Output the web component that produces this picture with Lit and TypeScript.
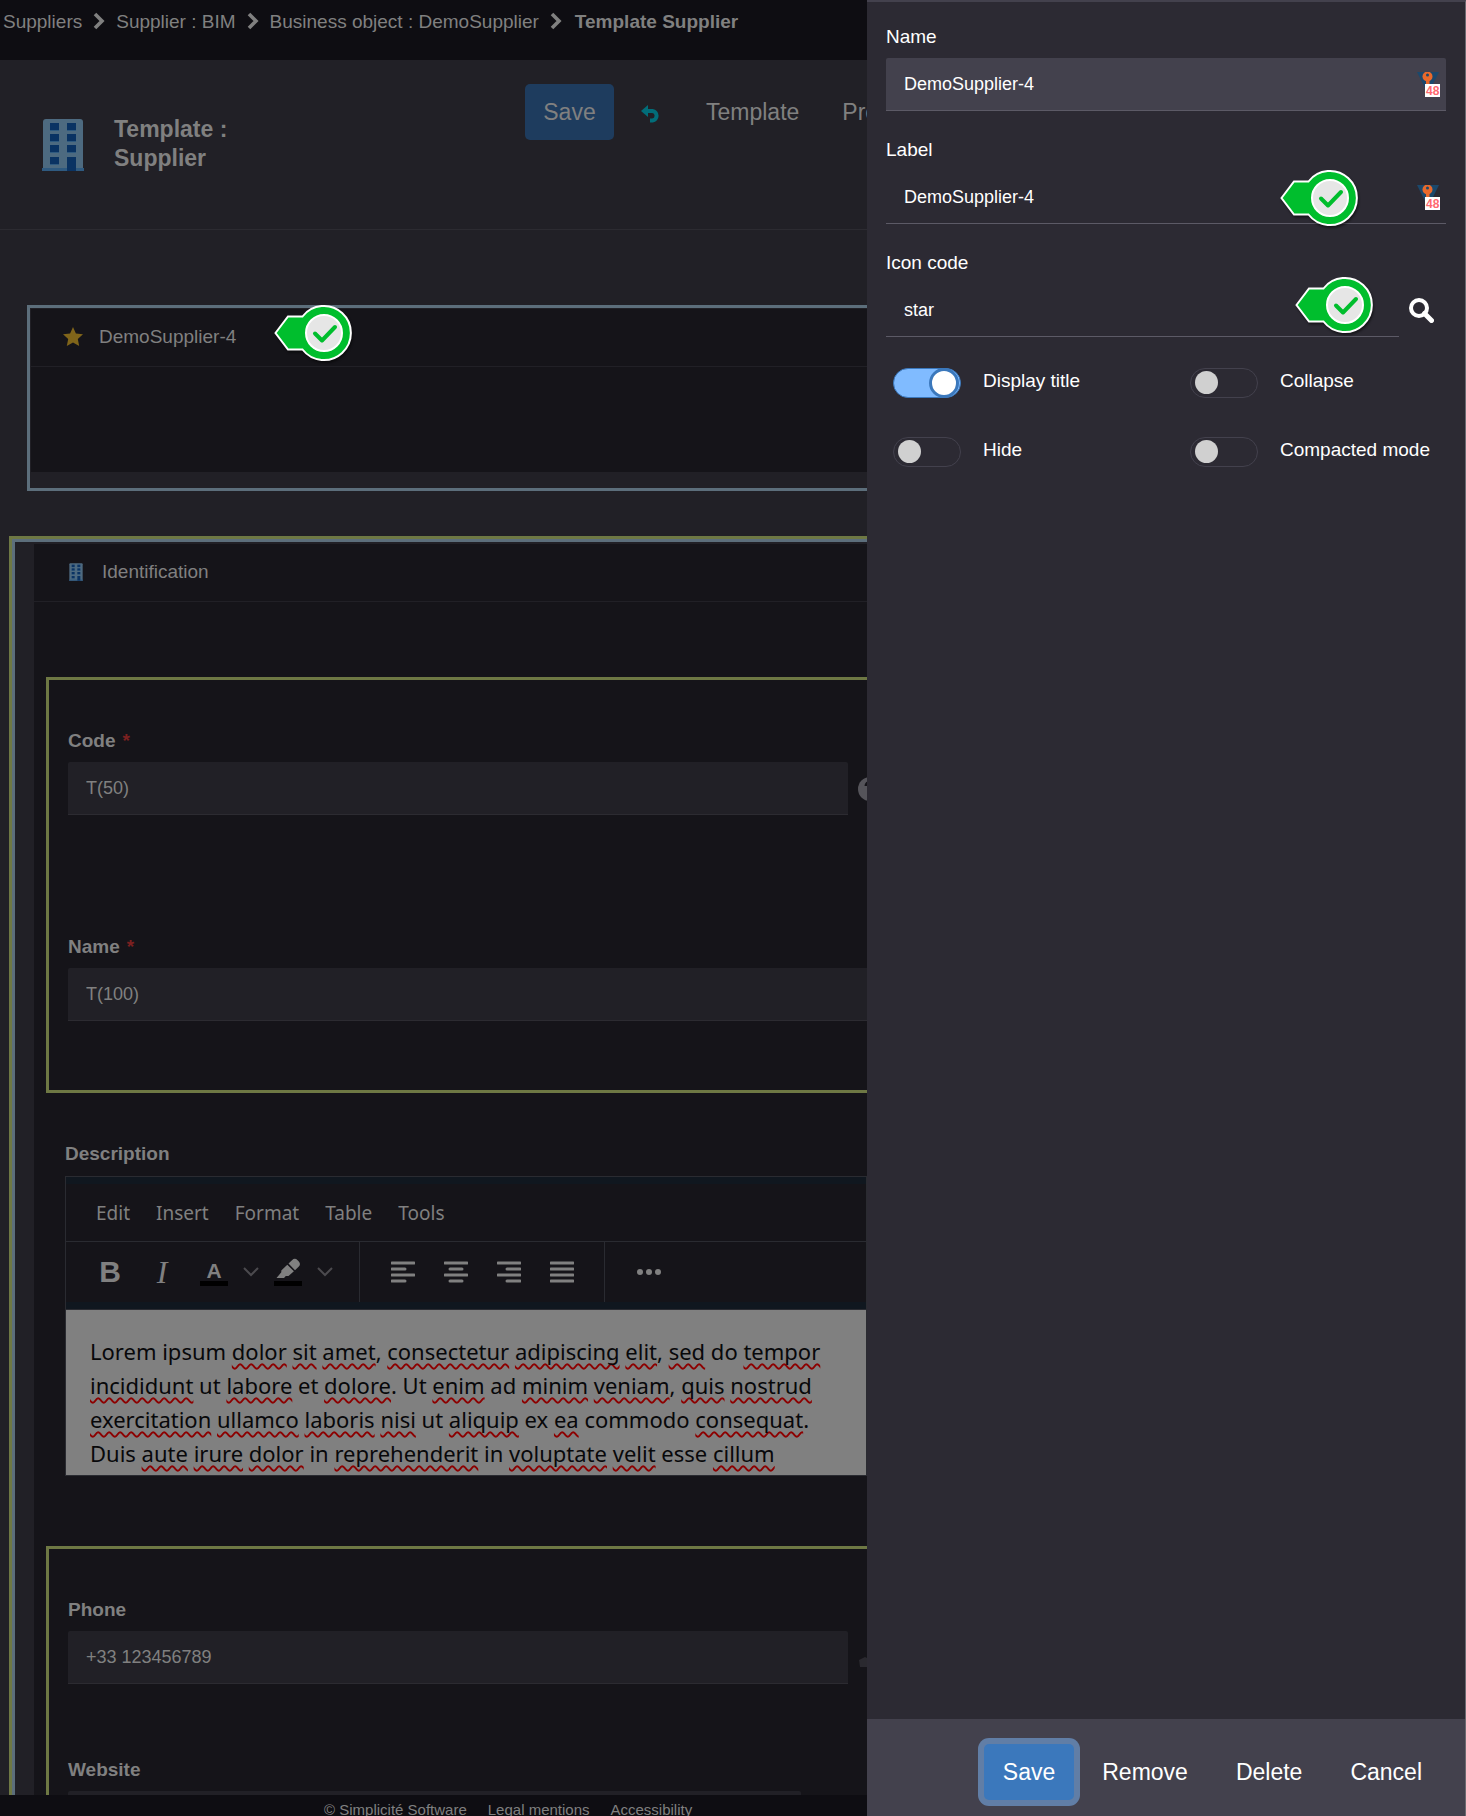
import { LitElement, html, css, svg, nothing } from "lit";
import { customElement, property } from "lit/decorators.js";

const chevron = html`<svg class="crumb-sep" viewBox="0 0 12 18" aria-hidden="true">
  <path d="M2 2l7 7-7 7" fill="none" stroke="currentColor" stroke-width="3.6" />
</svg>`;

const building = (cls: string) => html`<svg class=${cls} viewBox="0 0 42 52" aria-hidden="true">
  <path d="M1 52V3a3 3 0 0 1 3-3h34a3 3 0 0 1 3 3v49z" fill="#4d6a80" />
  <path d="M0 49h42v3H0z" fill="#2f5a80" />
  ${[4, 15, 26, 38].map((y) => svg`<path d="M8 ${y}h9v7H8z" fill="#0a3363" /><path d="M8 ${y + 7}h9v1H8z" fill="#2f5a80" />`)}
  ${[4, 15, 26].map((y) => svg`<path d="M25 ${y}h9v7h-9z" fill="#0a3363" /><path d="M25 ${y + 7}h9v1h-9z" fill="#2f5a80" />`)}
  <path d="M25 38h9v14h-9z" fill="#0a3363" />
</svg>`;

const alignIcon = (rows: number[][]) => html`<svg class="ic24" viewBox="0 0 24 22" aria-hidden="true">
  ${rows.map(([x1, x2], i) => svg`<path d="M${x1 + 1} ${2 + i * 6}H${x2 - 1}" stroke="currentColor" stroke-width="3" stroke-linecap="round" />`)}
</svg>`;

const caret = html`<svg class="caret" viewBox="0 0 16 10" aria-hidden="true">
  <path d="M1 1l7 7 7-7" fill="none" stroke="currentColor" stroke-width="2" />
</svg>`;

@customElement("check-marker")
export class CheckMarker extends LitElement {
  static styles = css`
    :host { display: block; width: 80px; height: 60px; pointer-events: none; }
    .pin { display: block; width: 80px; height: 60px; filter: drop-shadow(1px 2px 1px rgba(0, 0, 0, 0.5)); }
  `;
  render() {
    return html`<svg class="pin" viewBox="0 0 80 60" aria-hidden="true">
      <path d="M1.5 29L14 12.5H28.5A27 27 0 1 1 28.5 45.5H14Z" fill="#00be2d" stroke="#fff" stroke-width="2" />
      <circle cx="50" cy="29" r="18" fill="#e6e6e6" stroke="#fff" stroke-width="2" />
      <path d="M41 29.5l7 7 13-13.500" fill="none" stroke="#00be2d" stroke-width="4" stroke-linecap="round" stroke-linejoin="round" />
    </svg>`;
  }
}

@customElement("toggle-option")
export class ToggleOption extends LitElement {
  @property() label = "";
  @property({ type: Boolean }) on = false;
  static styles = css`
    .row { display: flex; align-items: center; gap: 22px; font: 19px/30px "Liberation Sans", sans-serif; color: #fff; white-space: nowrap; }
    .box { appearance: none; flex: none; display: flex; align-items: center; box-sizing: border-box; width: 68px; height: 30px; margin: 0; padding: 0 4px; border: 1px solid #43414d; border-radius: 15px; background: #2c2a33; }
    .box::before { content: ""; flex: none; width: 23px; height: 23px; border-radius: 50%; background: #d0d0d0; }
    .box:checked { justify-content: flex-end; padding: 0 1px 0 0; border-color: #3b78bc; background: #80bbff; }
    .box:checked::before { width: 24px; height: 24px; background: #fff; border: 3px solid #3b78bc; }
    .text { padding-bottom: 3px; }
  `;
  render() {
    return html`<label class="row">
      <input class="box" type="checkbox" role="switch" .checked=${this.on} />
      <span class="text">${this.label}</span>
    </label>`;
  }
}

@customElement("side-panel")
export class SidePanel extends LitElement {
  static styles = css`
    :host { display: flex; flex-direction: column; box-sizing: border-box; background: #2c2a33; border-top: 2px solid #43414d; border-right: 1px solid #6b6a70; color: #fff; font: 19px/23px "Liberation Sans", Arial, sans-serif; }
    .body { flex: 1; padding: 23px 19px; }
    .field { position: relative; margin-bottom: 27px; }
    .label { display: block; margin-bottom: 10px; }
    .line { display: flex; align-items: center; }
    .input { flex: 1; min-width: 0; box-sizing: border-box; height: 53px; padding: 0 18px; border: 0; border-bottom: 1px solid #5c5a66; border-radius: 2px 2px 0 0; background: transparent; color: #fff; font: 18px/23px "Liberation Sans", Arial, sans-serif; outline: none; }
    .input.filled { background: #43414d; }
    .badge { position: absolute; right: 6px; bottom: 14px; width: 24px; height: 25px; }
    .marker { position: absolute; right: 86px; bottom: -5px; }
    .marker.icon { right: 71px; bottom: 1px; }
    .search { flex: none; width: 47px; height: 53px; padding: 0 2px 0 0; border: 0; background: none; color: #fff; }
    .glass { display: block; width: 25px; height: 25px; margin: 0 auto; }
    .toggles { display: grid; grid-template-columns: repeat(2, 297px); row-gap: 36px; padding: 2px 7px; }
    .foot { display: flex; justify-content: flex-end; align-items: center; gap: 8px; height: 97px; padding: 8px 23px 0; box-sizing: border-box; background: #43414d; }
    .btn { height: 56px; padding: 0 20px; border: 0; border-radius: 5px; background: none; color: #fff; font: 23px/28px "Liberation Sans", Arial, sans-serif; }
    .btn.primary { padding: 0 19px; background: #3b78bc; box-shadow: 0 0 0 6px #617ea6; }
  `;
  private badge() {
    return html`<svg class="badge" viewBox="0 0 24 25" aria-hidden="true">
      <path d="M1 0h22L12 22z" fill="#1b486c" />
      <circle cx="11.500" cy="4.500" r="5" fill="#e8692b" />
      <path d="M10 8h3.500v8H10z" fill="#e8692b" />
      <circle cx="11.500" cy="3" r="1.500" fill="#1b486c" />
      <path d="M9 12h15v13H9z" fill="#fff" />
      <text x="10" y="23" font-size="12" font-weight="bold" font-family="Liberation Sans" fill="#ff6a70">48</text>
    </svg>`;
  }
  render() {
    return html`
      <div class="body">
        <div class="field">
          <label class="label" for="name">Name</label>
          <div class="line"><input class="input filled" id="name" value="DemoSupplier-4" /></div>
          ${this.badge()}
        </div>
        <div class="field">
          <label class="label" for="label">Label</label>
          <div class="line"><input class="input" id="label" value="DemoSupplier-4" /></div>
          ${this.badge()}
          <check-marker class="marker"></check-marker>
        </div>
        <div class="field">
          <label class="label" for="icon">Icon code</label>
          <div class="line">
            <input class="input" id="icon" value="star" />
            <button class="search" aria-label="Search">
              <svg class="glass" viewBox="0 0 25 25" aria-hidden="true">
                <circle cx="10" cy="10" r="8" fill="none" stroke="currentColor" stroke-width="4" />
                <path d="M15.500 15.500L22.500 22.500" stroke="currentColor" stroke-width="5" stroke-linecap="round" />
              </svg>
            </button>
          </div>
          <check-marker class="marker icon"></check-marker>
        </div>
        <div class="toggles">
          <toggle-option label="Display title" on></toggle-option>
          <toggle-option label="Collapse"></toggle-option>
          <toggle-option label="Hide"></toggle-option>
          <toggle-option label="Compacted mode"></toggle-option>
        </div>
      </div>
      <div class="foot">
        <button class="btn primary">Save</button>
        <button class="btn">Remove</button>
        <button class="btn">Delete</button>
        <button class="btn">Cancel</button>
      </div>
    `;
  }
}

const LINES = [
  "Lorem ipsum *dolor* *sit* *amet*, *consectetur* *adipiscing* *elit*, *sed* do *tempor*",
  "*incididunt* ut *labore* et *dolore*. Ut *enim* ad *minim* *veniam*, *quis* *nostrud*",
  "*exercitation* *ullamco* *laboris* *nisi* ut *aliquip* ex *ea* commodo *consequat*.",
  "Duis *aute* *irure* *dolor* in *reprehenderit* in *voluptate* *velit* esse *cillum*",
];

@customElement("rich-editor")
export class RichEditor extends LitElement {
  static styles = css`
    :host { display: block; border: 1px solid #2a2b31; background: #151419; color: #808080; font: 19px/24px "Noto Sans", "Open Sans", sans-serif; }
    .menus { display: flex; align-items: center; height: 65px; padding-left: 17px; box-sizing: border-box; border-top: 7px solid #10171f; border-bottom: 1px solid #2a2b31; }
    .menu { padding: 0 13px; border: 0; background: none; color: inherit; font: inherit; }
    .tools { display: flex; height: 67px; box-sizing: border-box; border-bottom: 7px solid #10171f; }
    .group { display: flex; align-items: center; padding: 0 16px; border-right: 1px solid #2a2b31; }
    .group.first { padding: 0 23px 0 18px; }
    .group.last { border: 0; padding-left: 17px; }
    .tool { display: flex; flex-direction: column; align-items: center; justify-content: center; width: 53px; height: 40px; padding: 0; border: 0; background: none; color: #808080; }
    .group.first .tool { width: 52px; }
    .tool.bold { font: bold 30px/34px "Liberation Sans", sans-serif; }
    .tool.italic { font: italic 32px/34px "Liberation Serif", serif; }
    .tool.letter { padding-top: 4px; font: bold 21px/18px "Liberation Sans", sans-serif; }
    .bar { width: 28px; height: 5px; margin-top: 1px; background: #000; }
    .drop { width: 22px; height: 40px; padding: 0; border: 0; background: none; color: #4b4a4e; }
    .caret { display: block; width: 16px; height: 10px; margin: 0 auto; }
    .ic24 { display: block; width: 24px; height: 22px; }
    .text { height: 166px; padding: 24px 24px 0; box-sizing: border-box; overflow: hidden; background: #808080; border-top: 1px solid #2a2b31; color: #08080a; font: 22px/34px "Noto Sans", "Open Sans", sans-serif; outline: none; }
    .ln { display: block; white-space: nowrap; }
    .sp { text-decoration: underline wavy #8c0000 2px; text-underline-offset: 3px; text-decoration-skip-ink: none; }
  `;
  render() {
    return html`
      <div class="menus">
        ${["Edit", "Insert", "Format", "Table", "Tools"].map((m) => html`<button class="menu">${m}</button>`)}
      </div>
      <div class="tools">
        <div class="group first">
          <button class="tool bold" aria-label="Bold">B</button>
          <button class="tool italic" aria-label="Italic">I</button>
          <button class="tool letter" aria-label="Text color">A<span class="bar"></span></button>
          <button class="drop" aria-label="Text colors">${caret}</button>
          <button class="tool" aria-label="Highlight">
            <svg class="ic24" viewBox="0 0 24 20" aria-hidden="true">
              <path d="M12.500 4.500L16 1.200a4 4 0 0 1 5.600 0l1 1a4 4 0 0 1 0 5.600L19 11.200z" fill="currentColor" />
              <path d="M11.300 5.800l6.600 6.500-5.400 4.600H9.800L8 19H0.500l4.800-5.800v-1.800z" fill="currentColor" />
            </svg>
            <span class="bar"></span>
          </button>
          <button class="drop" aria-label="Highlight colors">${caret}</button>
        </div>
        <div class="group">
          <button class="tool" aria-label="Align left">${alignIcon([[0, 24], [0, 15], [0, 24], [0, 15]])}</button>
          <button class="tool" aria-label="Align center">${alignIcon([[0, 24], [5, 19], [0, 24], [5, 19]])}</button>
          <button class="tool" aria-label="Align right">${alignIcon([[0, 24], [9, 24], [0, 24], [9, 24]])}</button>
          <button class="tool" aria-label="Justify">${alignIcon([[0, 24], [0, 24], [0, 24], [0, 24]])}</button>
        </div>
        <div class="group last">
          <button class="tool" aria-label="More">
            <svg class="ic24" viewBox="0 0 24 22" aria-hidden="true">
              ${[3, 12, 21].map((x) => svg`<circle cx=${x} cy="11" r="3" fill="currentColor" />`)}
            </svg>
          </button>
        </div>
      </div>
      <div class="text" role="textbox" aria-label="Description" contenteditable="true" spellcheck="false">${LINES.map(
        (l) => html`<span class="ln">${l.split("*").map((t, i) => (i % 2 ? html`<span class="sp">${t}</span>` : t))}</span>`
      )}</div>
    `;
  }
}

@customElement("form-field")
export class FormField extends LitElement {
  @property() label = "";
  @property() value = "";
  @property() icon = "";
  @property({ type: Boolean }) required = false;
  static styles = css`
    :host { display: block; }
    .label { display: block; margin-bottom: 10px; color: #808080; font: bold 19px/23px "Liberation Sans", Arial, sans-serif; }
    .star { margin-left: 7px; color: #7c2020; }
    .line { display: flex; align-items: center; gap: 10px; }
    .input { flex: 1; min-width: 0; height: 53px; box-sizing: border-box; padding: 1px 18px 0; border: 0; border-bottom: 1px solid #2c2b31; border-radius: 2px 2px 0 0; background: #212026; color: #808080; font: 18px/23px "Liberation Sans", Arial, sans-serif; outline: none; }
    .side { flex: none; width: 24px; height: 24px; margin-right: -34px; }
  `;
  render() {
    return html`
      <label class="label" for="f">${this.label}${this.required ? html`<span class="star">*</span>` : nothing}</label>
      <div class="line">
        <input class="input" id="f" .value=${this.value} />
        ${this.icon === "help"
          ? html`<svg class="side" viewBox="0 0 24 24" aria-hidden="true"><circle cx="12" cy="12" r="12" fill="#55545a" /><path d="M8 9a4 4 0 1 1 5 4l-1 2v1" fill="none" stroke="#151419" stroke-width="3" /><circle cx="12" cy="19" r="1.500" fill="#151419" /></svg>`
          : nothing}
        ${this.icon === "phone"
          ? html`<svg class="side" viewBox="0 0 24 24" aria-hidden="true"><path d="M1 14l6-3 2 1v9H2z" fill="#2a292f" /></svg>`
          : nothing}
      </div>
    `;
  }
}

@customElement("app-root")
export class AppRoot extends LitElement {
  static styles = css`
    :host { position: relative; display: flex; flex-direction: column; height: 100vh; overflow: hidden; background: #212026; color: #808080; font: 19px/23px "Liberation Sans", Arial, sans-serif; }
    .crumbs { flex: none; display: flex; height: 60px; box-sizing: border-box; padding: 10px 3px; gap: 11px; background: #0e0d12; white-space: nowrap; }
    .crumb { color: inherit; text-decoration: none; }
    .crumb.current { font-weight: bold; margin-left: 2px; }
    .crumb-sep { width: 12px; height: 18px; margin-top: 2px; color: #808080; }
    .head { flex: none; display: flex; align-items: flex-start; height: 170px; box-sizing: border-box; padding: 24px 0 0 42px; border-bottom: 1px solid #2c2b31; white-space: nowrap; }
    .logo { width: 42px; height: 52px; margin-top: 35px; }
    .title { width: 411px; margin: 31px 0 0; padding-left: 30px; box-sizing: border-box; font-size: 23px; line-height: 29px; }
    .title-line { display: block; }
    .btn { height: 56px; padding: 0 19px; border: 0; border-radius: 5px; background: none; color: inherit; font: 23px/28px "Liberation Sans", Arial, sans-serif; }
    .btn.save { width: 89px; margin-left: 30px; padding: 0 18px; background: #1e3c5e; }
    .actions { display: flex; align-items: center; }
    .undo { width: 73px; height: 56px; padding: 0; border: 0; background: none; color: #026d79; }
    .undo-ic { display: block; width: 19px; height: 18px; margin: 4px auto 0; }
    .next { padding: 0 24px; }
    .content { flex: 1; min-height: 0; overflow: hidden; }
    .zone { position: relative; margin: 75px 27px 0; padding: 1px 1px 16px; border: 3px solid #5c6e7b; }
    .card { background: #151419; }
    .card-head { display: flex; align-items: center; height: 58px; box-sizing: border-box; padding: 0 32px 2px; border-bottom: 1px solid #212026; }
    .star { width: 20px; height: 20px; margin-right: 16px; color: #80651a; }
    .empty { height: 105px; }
    .marker { position: absolute; left: 244px; top: -4px; }
    .outer { margin: 45px 9px 0; border: 3px solid #6e7844; border-bottom: 0; }
    .inner { padding: 2px 19px 0; border: 3px solid #5c6e7b; border-bottom: 0; }
    .mini { width: 14px; height: 18px; margin: 1px 19px 0 3px; }
    .fields { padding: 75px 12px 0; }
    .group { padding: 49px 19px 69px; border: 3px solid #6e7844; }
    .half { width: 780px; max-width: 60%; }
    .short { width: 733px; max-width: 60%; }
    .gap-lg { margin-bottom: 120px; }
    .gap-sm { margin-bottom: 74px; }
    .desc { width: 802px; max-width: 61%; padding: 49px 19px 70px; }
    .desc-label { margin-bottom: 11px; font-weight: bold; }
    .foot { flex: none; display: flex; gap: 21px; height: 21px; box-sizing: border-box; overflow: hidden; padding: 6px 0 0 324px; background: #0e0d12; font-size: 15px; line-height: 17px; }
    .foot-link { color: inherit; text-decoration: none; }
    .panel { position: absolute; top: 0; right: 0; bottom: 0; width: 599px; max-width: 100%; }
  `;
  render() {
    return html`
      <nav class="crumbs" aria-label="Breadcrumb">
        <a class="crumb" href="#">Suppliers</a>${chevron}
        <a class="crumb" href="#">Supplier : BIM</a>${chevron}
        <a class="crumb" href="#">Business object : DemoSupplier</a>${chevron}
        <a class="crumb current" href="#">Template Supplier</a>
      </nav>
      <header class="head">
        ${building("logo")}
        <h1 class="title"><span class="title-line">Template :</span><span class="title-line">Supplier</span></h1>
        <div class="actions">
          <button class="btn save">Save</button>
          <button class="undo" aria-label="Undo">
            <svg class="undo-ic" viewBox="0 0 19 18" aria-hidden="true">
              <path d="M0 6l7-6v12z" fill="currentColor" />
              <path d="M6 6h5.500a4.800 4.800 0 0 1 0 9.500H9" fill="none" stroke="currentColor" stroke-width="4" />
            </svg>
          </button>
          <button class="btn">Template</button>
          <button class="btn next">Preview</button>
        </div>
      </header>
      <main class="content">
        <section class="zone">
          <div class="card">
            <div class="card-head">
              <svg class="star" viewBox="0 0 20 20" aria-hidden="true">
                <path d="M10 0l2.900 6.500 7.100.8-5.200 4.800L16.200 19 10 15.600 3.800 19l1.400-6.900L0 7.300l7.100-.8z" fill="currentColor" />
              </svg>
              DemoSupplier-4
            </div>
            <div class="empty"></div>
          </div>
          <check-marker class="marker"></check-marker>
        </section>
        <section class="outer">
          <div class="inner">
            <div class="card">
              <div class="card-head">${building("mini")}Identification</div>
              <div class="fields">
                <div class="group">
                  <form-field class="half gap-lg" label="Code" value="T(50)" icon="help" required></form-field>
                  <form-field label="Name" value="T(100)" required></form-field>
                </div>
                <div class="desc">
                  <div class="desc-label">Description</div>
                  <rich-editor></rich-editor>
                </div>
                <div class="group">
                  <form-field class="half gap-sm" label="Phone" value="+33 123456789" icon="phone"></form-field>
                  <form-field class="short" label="Website"></form-field>
                </div>
              </div>
            </div>
          </div>
        </section>
      </main>
      <footer class="foot">
        <span>© Simplicité Software</span>
        <a class="foot-link" href="#">Legal mentions</a>
        <a class="foot-link" href="#">Accessibility</a>
      </footer>
      <side-panel class="panel"></side-panel>
    `;
  }
}
